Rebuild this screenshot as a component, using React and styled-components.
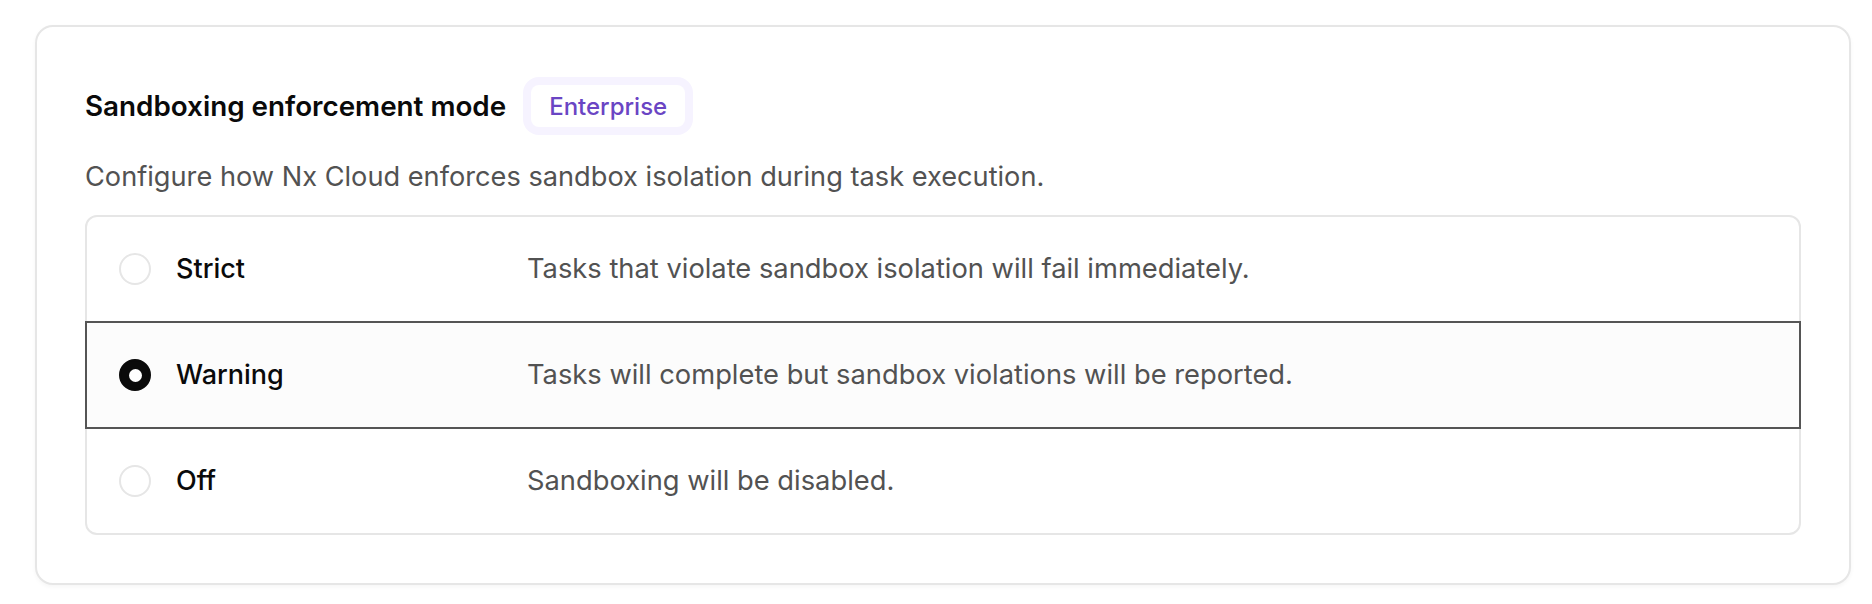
import React, { useState } from 'react';
import styled, { createGlobalStyle } from 'styled-components';

const GlobalStyle = createGlobalStyle`
  body {
    margin: 0;
    background: #ffffff;
    font-family: Inter, "Noto Sans", "Liberation Sans", sans-serif;
    -webkit-font-smoothing: antialiased;
  }
`;

const Page = styled.div`
  padding: 25px 21px 20px 35px;
`;

const Card = styled.section`
  background: #ffffff;
  border: 2px solid #e6e6e6;
  border-radius: 18px;
  box-shadow: 0 2px 4px rgba(0, 0, 0, 0.04);
  padding: 58px 48px 48px;
`;

const Header = styled.div`
  display: flex;
  align-items: center;
  gap: 25px;
  height: 42px;
`;

const Title = styled.h2`
  margin: 0;
  font-size: 27.8px;
  line-height: 40px;
  font-weight: 600;
  color: #0a0a0a;
`;

const Badge = styled.span`
  display: inline-flex;
  align-items: center;
  height: 42px;
  padding: 0 18px;
  background: #ffffff;
  border-radius: 8px;
  box-shadow: 0 0 0 8px #f6f3ff;
  color: #6a45c4;
  font-size: 24px;
  font-weight: 500;
`;

const Description = styled.p`
  margin: 30px 0 18px;
  font-size: 27.2px;
  line-height: 40px;
  color: #525252;
`;

const Options = styled.div`
  display: flex;
  flex-direction: column;
`;

const Option = styled.label`
  position: relative;
  z-index: ${p => (p.$checked ? 1 : 0)};
  display: grid;
  grid-template-columns: 408px 1fr;
  align-items: center;
  padding: 32px 32px;
  margin-top: -2px;
  border: 2px solid ${p => (p.$checked ? '#555555' : '#e6e6e6')};
  background: ${p => (p.$checked ? '#fcfcfc' : '#ffffff')};
  cursor: pointer;

  &:first-child {
    margin-top: 0;
    border-radius: 12px 12px 0 0;
  }
  &:last-child {
    border-radius: 0 0 12px 12px;
  }
`;

const LabelCell = styled.span`
  display: flex;
  align-items: center;
  gap: 25px;
`;

const Radio = styled.span`
  box-sizing: border-box;
  display: inline-flex;
  align-items: center;
  justify-content: center;
  width: 32px;
  height: 32px;
  border-radius: 50%;
  border: 2px solid ${p => (p.$checked ? '#0a0a0a' : '#e6e6e6')};
  background: ${p => (p.$checked ? '#0a0a0a' : '#ffffff')};

  &::after {
    content: '';
    display: ${p => (p.$checked ? 'block' : 'none')};
    width: 13px;
    height: 13px;
    border-radius: 50%;
    background: #ffffff;
  }
`;

const OptionName = styled.span`
  font-size: 27px;
  line-height: 40px;
  font-weight: 500;
  color: #0a0a0a;
`;

const OptionText = styled.span`
  font-size: 27.3px;
  line-height: 40px;
  color: #525252;
`;

const HiddenInput = styled.input`
  display: none;
`;

const modes = [
  { id: 'strict', name: 'Strict', text: 'Tasks that violate sandbox isolation will fail immediately.' },
  { id: 'warning', name: 'Warning', text: 'Tasks will complete but sandbox violations will be reported.' },
  { id: 'off', name: 'Off', text: 'Sandboxing will be disabled.' },
];

export default function App() {
  const [mode, setMode] = useState('warning');

  return (
    <Page>
      <GlobalStyle />
      <Card>
        <Header>
          <Title>Sandboxing enforcement mode</Title>
          <Badge>Enterprise</Badge>
        </Header>
        <Description>Configure how Nx Cloud enforces sandbox isolation during task execution.</Description>
        <Options>
          {modes.map(m => (
            <Option key={m.id} $checked={mode === m.id}>
              <HiddenInput
                type="radio"
                name="sandbox-mode"
                checked={mode === m.id}
                onChange={() => setMode(m.id)}
              />
              <LabelCell>
                <Radio $checked={mode === m.id} />
                <OptionName>{m.name}</OptionName>
              </LabelCell>
              <OptionText>{m.text}</OptionText>
            </Option>
          ))}
        </Options>
      </Card>
    </Page>
  );
}
